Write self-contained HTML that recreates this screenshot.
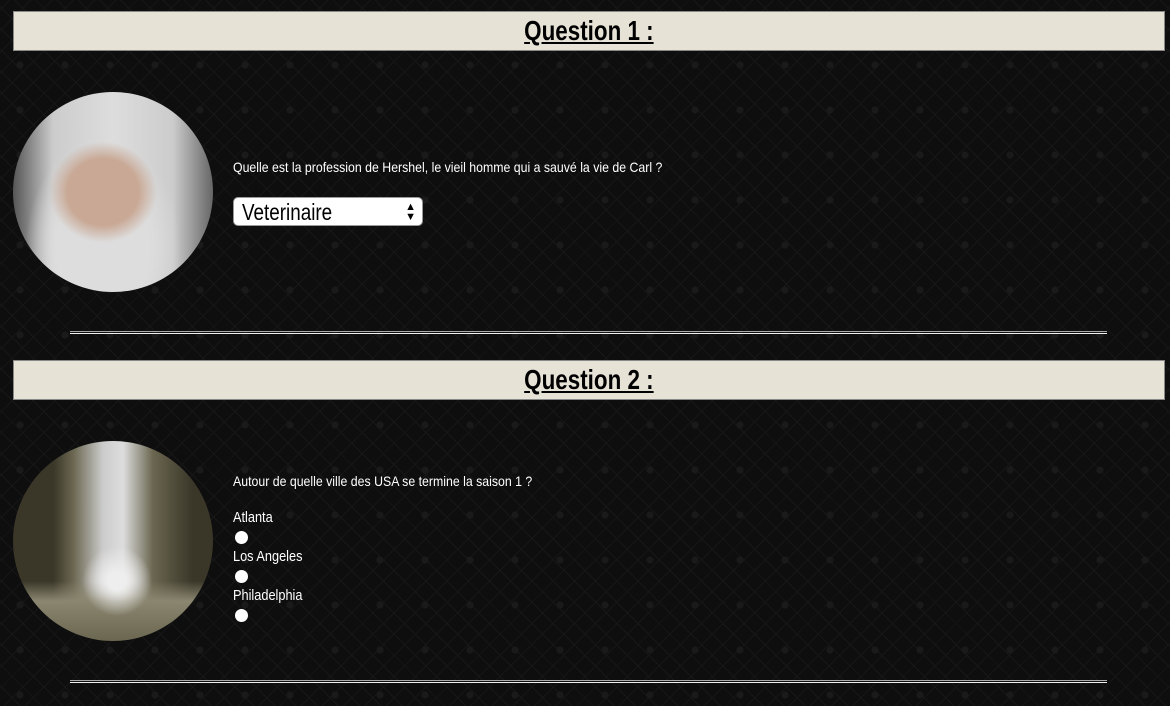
<!DOCTYPE html>
<html><head><meta charset="utf-8"><style>
body{margin:0;width:1170px;height:706px;overflow:hidden;background:#0e0e0e;font-family:"Liberation Sans",sans-serif;color:#fff;position:relative}
.bg{position:absolute;inset:0;background:
radial-gradient(circle at 20px 20px,#1a1a1a 3px,transparent 4px) 0 0/45px 45px,
repeating-linear-gradient(45deg,transparent 0 14px,#171717 14px 15px),
repeating-linear-gradient(-45deg,transparent 0 14px,#161616 14px 15px),#0e0e0e}
.h{position:absolute;left:13px;width:1150px;height:38px;background:#e6e2d6;border:1px solid #888;color:#000;text-align:center;font-weight:bold;font-size:28px;line-height:38px}
.h span{text-decoration:underline;display:inline-block;transform:scaleX(.8)}
.c{position:absolute;left:13px;width:200px;height:200px;border-radius:50%}
.t{position:absolute;left:233px;font-size:14px;transform:scaleX(.88);transform-origin:0 0;white-space:nowrap}
.o{position:absolute;left:233px;font-size:15px;transform:scaleX(.85);transform-origin:0 0;white-space:nowrap}
.hr{position:absolute;left:70px;width:1037px;height:1px;border-top:1px solid #aaa;border-bottom:1px solid #eee}
.r{position:absolute;left:235px;width:13px;height:13px;border-radius:50%;background:#fff}
</style></head><body><div class="bg"></div>
<div class="h" style="top:11px"><span>Question 1 :</span></div>
<div class="c" style="top:92px;background:radial-gradient(ellipse 30% 28% at 45% 50%,#c9a996 0 60%,transparent 90%),radial-gradient(ellipse at 45% 78%,#ddd 0 30%,transparent 50%),linear-gradient(90deg,#555 0,#ccc 20%,#ddd 50%,#ccc 80%,#666),linear-gradient(#ddd,#bbb)"></div>
<div class="t" style="top:159px">Quelle est la profession de Hershel, le vieil homme qui a sauvé la vie de Carl ?</div>
<div style="position:absolute;left:233px;top:197px;height:29px;background:#fff;border:1px solid #999;border-radius:5px;color:#000;box-sizing:border-box;width:190px"><span style="position:absolute;left:8px;top:0;font-size:23px;line-height:29px;transform:scaleX(.82);transform-origin:0 0">Veterinaire</span><span style="position:absolute;right:6px;font-size:11px;line-height:10px;top:4px">▲<br>▼</span></div>
<div class="hr" style="top:331px"></div>
<div class="h" style="top:360px"><span>Question 2 :</span></div>
<div class="c" style="top:441px;background:radial-gradient(circle at 52% 70%,#eee 0 5%,transparent 20%),linear-gradient(transparent 70%,#8a8670 80%,#6a6650),linear-gradient(90deg,#3a3628 0 20%,#6a6650 30%,#ccc 45%,#ddd 55%,#6a6650 70%,#3a3628 90%)"></div>
<div class="t" style="top:473px">Autour de quelle ville des USA se termine la saison 1 ?</div>
<div class="o" style="top:509px">Atlanta</div><div class="r" style="top:531px"></div>
<div class="o" style="top:548px">Los Angeles</div><div class="r" style="top:570px"></div>
<div class="o" style="top:587px">Philadelphia</div><div class="r" style="top:609px"></div>
<div class="hr" style="top:680px"></div>
</body></html>
